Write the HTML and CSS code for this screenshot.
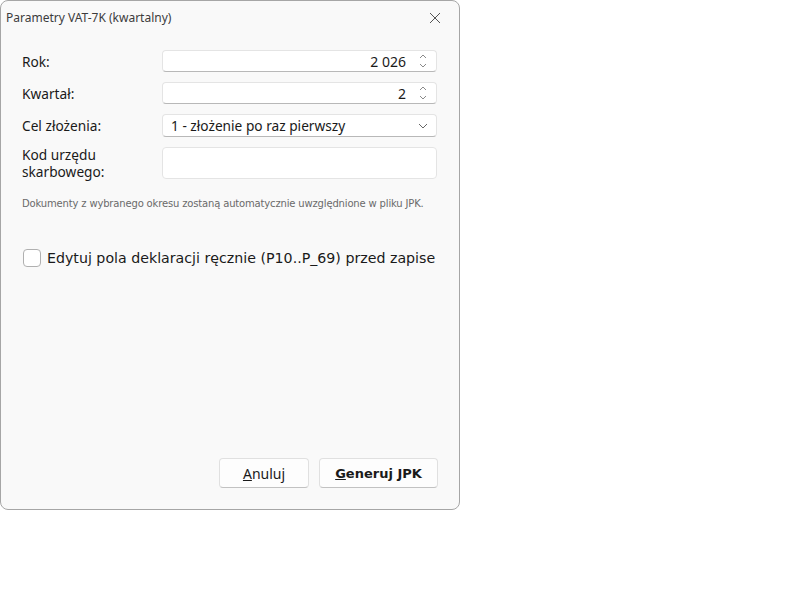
FILE: index.html
```html
<!DOCTYPE html>
<html lang="pl">
<head>
<meta charset="utf-8">
<title>Parametry VAT-7K</title>
<link rel="stylesheet" href="styles.css">
</head>
<body>
<div class="dialog">
  <div class="titlebar">
    <span class="title">Parametry VAT-7K (kwartalny)</span>
    <svg class="close" width="12" height="12" viewBox="0 0 12 12"><path d="M1 1L11 11M11 1L1 11" stroke="#555" stroke-width="1" fill="none"/></svg>
  </div>
  <div class="content">
    <div class="form">
      <label class="lbl">Rok:</label>
      <div class="field spin"><span class="val">2 026</span><span class="arrows"><svg width="10" height="18" viewBox="0 0 10 18"><path d="M2 6L5 3L8 6M2 12L5 15L8 12" stroke="#8a8a8a" fill="none" stroke-width="1"/></svg></span></div>
      <label class="lbl">Kwartał:</label>
      <div class="field spin"><span class="val">2</span><span class="arrows"><svg width="10" height="18" viewBox="0 0 10 18"><path d="M2 6L5 3L8 6M2 12L5 15L8 12" stroke="#8a8a8a" fill="none" stroke-width="1"/></svg></span></div>
      <label class="lbl">Cel złożenia:</label>
      <div class="field combo"><span class="cval">1 - złożenie po raz pierwszy</span><svg width="12" height="8" viewBox="0 0 12 8"><path d="M2 2L6 6L10 2" stroke="#666" fill="none" stroke-width="1"/></svg></div>
      <label class="lbl two"><span class="ln">Kod urzędu</span><span class="ln">skarbowego:</span></label>
      <div class="field tall"></div>
    </div>
    <p class="note">Dokumenty z wybranego okresu zostaną automatycznie uwzględnione w pliku JPK.</p>
    <div class="check"><span class="box"></span><span class="ctext">Edytuj pola deklaracji ręcznie (P10..P_69) przed zapise</span></div>
    <div class="spacer"></div>
    <div class="buttons">
      <button class="btn cancel"><u>A</u>nuluj</button>
      <button class="btn primary"><u>G</u>eneruj JPK</button>
    </div>
  </div>
</div>
</body>
</html>
```
FILE: styles.css
```css
html, body { margin: 0; padding: 0; background: #fff; }
body { width: 800px; height: 600px; overflow: hidden; font-family: "Noto Sans", "Open Sans", sans-serif; color: #1a1a1a; }
.dialog {
  width: 458px; height: 508px;
  border: 1px solid #a6a6a6; border-radius: 8px;
  background: #f9f9f9;
  display: flex; flex-direction: column;
  overflow: hidden;
}
.titlebar {
  height: 35px; display: flex; align-items: center; justify-content: space-between;
  padding: 0 18px 0 5px;
}
.title { font-size: 12px; color: #3c3c3c; position: relative; top: -1px; }
.close { position: relative; top: -1px; }
.content { flex: 1; padding: 14px 21px 21px 21px; display: flex; flex-direction: column; }
.form { display: grid; grid-template-columns: 140px 275px; grid-template-rows: 22px 22px 23px 32px; row-gap: 10px; align-items: center; }
.lbl { font-size: 13.7px; line-height: 17px; color: #1a1a1a; }
.two { display: flex; flex-direction: column; }
.ln { display: block; height: 17px; line-height: 17px; }
.field {
  box-sizing: border-box; height: 100%; background: #fff;
  border: 1px solid #e4e4e4; border-bottom-color: #b8b8b8; border-radius: 4px;
  display: flex; align-items: center;
}
.spin { justify-content: flex-end; padding-right: 8px; }
.val { font-size: 14px; margin-right: 12px; }
.arrows { display: flex; }
.combo { justify-content: space-between; padding: 0 7px 0 8px; }
.cval { font-size: 13.7px; }
.tall { border-bottom-color: #e4e4e4; }
.note { margin: 19px 0 0 0; font-family: "DejaVu Sans", sans-serif; font-size: 10px; color: #6a6a6a; letter-spacing: -0.16px; }
.check { margin-top: 40px; display: flex; align-items: center; gap: 6px; margin-left: 1px; white-space: nowrap; overflow: hidden; }
.box { width: 18px; height: 18px; box-sizing: border-box; border: 1px solid #b0b0b0; border-radius: 4px; background: #fff; flex: none; }
.ctext { font-family: "DejaVu Sans", sans-serif; font-size: 14.2px; color: #1a1a1a; }
.spacer { flex: 1; }
.buttons { display: flex; justify-content: flex-end; gap: 10px; }
.btn {
  height: 30px; box-sizing: border-box; background: #fdfdfd;
  border: 1px solid #e0e0e0; border-bottom-color: #c2c2c2; border-radius: 4px;
  font-family: "Noto Sans", sans-serif; font-size: 14px; color: #1a1a1a; padding: 0;
}
.cancel { width: 90px; }
.primary { width: 119px; font-family: "DejaVu Sans", sans-serif; font-weight: bold; font-size: 13px; }
```
